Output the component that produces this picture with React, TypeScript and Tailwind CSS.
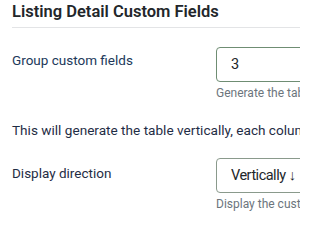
export default function App() {
  return (
    <div className="w-[300px] h-[219px] overflow-hidden bg-white font-['Roboto',sans-serif]">
      <div className="pl-3">
        <h2 className="pt-[1px] pb-[4px] text-[16.5px] leading-[22px] font-semibold text-[#22262a] border-b border-[#e3e4e6] whitespace-nowrap">
          Listing Detail Custom Fields
        </h2>

        <div className="mt-[19px] flex">
          <div className="w-[204px] shrink-0 pt-[3px] text-[13.5px] leading-[20px] text-[#22385a]">Group custom fields</div>
          <div className="shrink-0">
            <div className="w-[200px] h-[35px] rounded-[4px] border border-[#6f8d73] pl-[14px] flex items-center text-[14.5px] text-[#22262a]">
              3
            </div>
            <div className="mt-[3px] text-[12px] leading-[16px] text-[#6c757d] whitespace-nowrap">
              Generate the table with this many columns
            </div>
          </div>
        </div>

        <p className="mt-[19px] text-[13.6px] leading-[20px] text-[#1f2d45] whitespace-nowrap">
          This will generate the table vertically, each column listed in order
        </p>

        <div className="mt-[18px] flex">
          <div className="w-[204px] shrink-0 pt-[5px] text-[13.5px] leading-[20px] text-[#1f2d45]">Display direction</div>
          <div className="shrink-0">
            <div className="w-[200px] h-[35px] rounded-[4px] border border-[#8a9a8c] pl-[14px] flex items-center text-[14.5px] tracking-[-0.5px] text-[#22262a]">
              Vertically ↓
            </div>
            <div className="mt-[3px] text-[12px] leading-[16px] text-[#6c757d] whitespace-nowrap">
              Display the custom fields
            </div>
          </div>
        </div>
      </div>
    </div>
  );
}
